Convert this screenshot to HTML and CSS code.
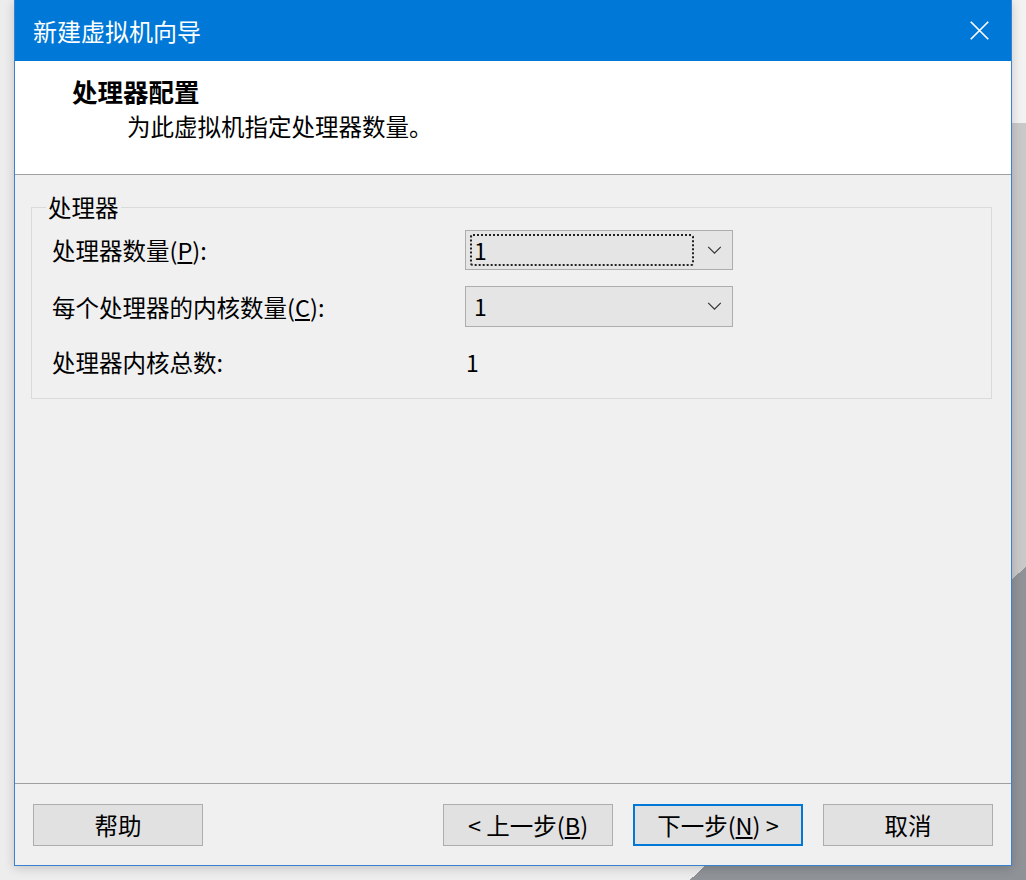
FILE: index.html
```html
<!DOCTYPE html>
<html lang="zh-CN">

<head>
  <meta charset="UTF-8" />
  <meta name="viewport" content="width=device-width, initial-scale=1.0" />
  <title>新建虚拟机向导</title>
  <link rel="stylesheet" href="styles.css">
</head>

<body>
  <div class="window">
    <header class="titlebar">
      <h1>新建虚拟机向导</h1>
      <svg class="close" viewBox="0 0 24 24" width="24" height="24">
        <path d="M2 2 L22 22 M22 2 L2 22" stroke="#fff" stroke-width="2" fill="none" />
      </svg>
    </header>

    <section class="head">
      <h2>处理器配置</h2>
      <p>为此虚拟机指定处理器数量。</p>
    </section>

    <main class="content">
      <fieldset class="group">
        <legend>处理器</legend>
        <div class="rows">
          <label>处理器数量(<u>P</u>):</label>
          <div class="combo">
            <span class="value focus">1</span>
            <svg class="chevron" viewBox="0 0 16 10" width="16" height="10">
              <path d="M1 1 L8 8 L15 1" stroke="#333" stroke-width="1.3" fill="none" />
            </svg>
          </div>

          <label>每个处理器的内核数量(<u>C</u>):</label>
          <div class="combo">
            <span class="value">1</span>
            <svg class="chevron" viewBox="0 0 16 10" width="16" height="10">
              <path d="M1 1 L8 8 L15 1" stroke="#333" stroke-width="1.3" fill="none" />
            </svg>
          </div>

          <label>处理器内核总数:</label>
          <span class="total">1</span>
        </div>
      </fieldset>
    </main>

    <footer class="buttons">
      <button class="btn">帮助</button>
      <div class="right">
        <button class="btn">&lt; 上一步(<u>B</u>)</button>
        <button class="btn default">下一步(<u>N</u>) &gt;</button>
        <button class="btn">取消</button>
      </div>
    </footer>
  </div>
</body>

</html>
```

FILE: styles.css
```css
* {
  box-sizing: border-box;
}

html {
  font-family: "Noto Sans CJK SC", "Noto Sans", sans-serif;
}

body {
  margin: 0;
  width: 1026px;
  height: 880px;
  overflow: hidden;
  background:
    linear-gradient(137deg, transparent 0 1114px, #8f9398 1114px),
    linear-gradient(to bottom, #f2f2f2 0 123px, #c9c9c9 123px) right top / 14px 100% no-repeat,
    #ededed;
}

.window {
  margin-left: 14px;
  width: 998px;
  height: 866px;
  display: flex;
  flex-direction: column;
  background: #f0f0f0;
  border: 1px solid #3a82d0;
  border-top: none;
  box-shadow: 0 2px 10px rgba(0, 0, 0, 0.18);
}

.titlebar {
  height: 61px;
  flex: none;
  background: #0078d7;
  color: #fff;
  display: flex;
  align-items: center;
  justify-content: space-between;
  padding: 0 20px 0 18px;
}

.titlebar h1 {
  margin: 0;
  font-size: 24px;
  font-weight: 400;
}

.close {
  width: 21px;
  height: 21px;
  margin-right: 1px;
}

.head {
  height: 114px;
  flex: none;
  background: #fff;
  border-bottom: 1px solid #a0a0a0;
  padding: 13px 0 0 57px;
}

.head h2 {
  margin: 0;
  font-size: 25.5px;
  line-height: 34px;
  font-weight: 700;
}

.head p {
  margin: 0;
  padding-left: 55px;
  font-size: 23.5px;
  line-height: 36px;
}

.content {
  flex: 1;
  padding: 18px 19px 0 16px;
}

.group {
  margin: 0;
  border: 1px solid #dadada;
  padding: 9px 20px 17px 20px;
}

.group legend {
  font-size: 23.5px;
  line-height: 28px;
  padding: 0 2px;
  margin-left: -6px;
}

.rows {
  display: grid;
  grid-template-columns: 413px 268px;
  grid-template-rows: 40px 41px 38px;
  row-gap: 16px;
  align-items: center;
  font-size: 23.5px;
}

.rows label {
  line-height: 30px;
}

.combo {
  height: 100%;
  background: #e5e5e5;
  border: 1px solid #adadad;
  display: flex;
  align-items: center;
  justify-content: space-between;
  padding: 0 10px 0 4px;
}

.value {
  font-size: 23px;
  line-height: 30px;
  padding-left: 4px;
  width: 224px;
  height: 32px;
}

.value.focus {
  border: 2px dotted #222;
  border-radius: 3px;
  padding-left: 2px;
  line-height: 28px;
}

.chevron {
  width: 15px;
  height: 9px;
}

.total {
  font-size: 23px;
  padding-left: 1px;
}

.buttons {
  flex: none;
  height: 82px;
  border-top: 1px solid #a0a0a0;
  display: flex;
  justify-content: space-between;
  align-items: flex-start;
  padding: 20px 18px 0 18px;
}

.right {
  display: flex;
  gap: 20px;
}

.btn {
  width: 170px;
  height: 42px;
  font-family: inherit;
  font-size: 23.5px;
  background: #e1e1e1;
  border: 1px solid #adadad;
  color: #000;
  padding: 0;
}

.btn.default {
  border: 2px solid #0078d7;
}
```
